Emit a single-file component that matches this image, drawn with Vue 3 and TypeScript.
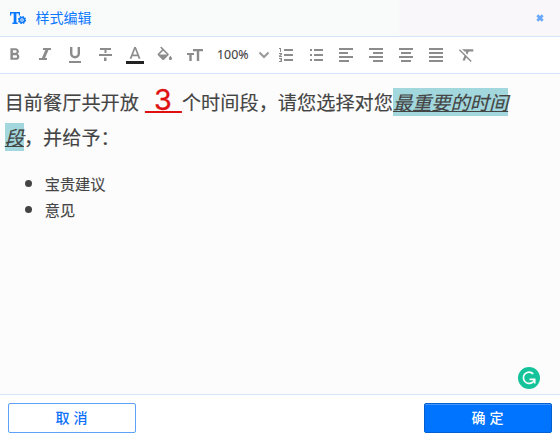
<script setup lang="ts">
interface Tool {
  name: string
  path: string
  transform?: string
}

const textTools: Tool[] = [
  { name: '加粗', transform: 'translate(4.6 7.9) scale(.83)', path: 'M15.6 10.79c.97-.67 1.65-1.77 1.65-2.79 0-2.26-1.75-4-4-4H7v14h7.04c2.09 0 3.71-1.7 3.71-3.79 0-1.52-.86-2.82-2.15-3.42zM10 6.5h3c.83 0 1.5.67 1.5 1.5s-.67 1.5-1.5 1.5h-3v-3zm3.5 9H10v-3h3.5c.83 0 1.5.67 1.5 1.5s-.67 1.5-1.5 1.5z' },
  { name: '斜体', path: 'M13 11h8v2h-2.500l-3.400 8H17v2H9v-2h2.900l3.400-8H13z' },
  { name: '下划线', path: 'M10 10h2.400v6.300a2.600 2.600 0 0 0 5.200 0V10H20v6.500a5 5 0 0 1-10 0zM9 24h12v2H9z' },
  { name: '删除线', path: 'M10 11h11v2h-4.500v3h-2v-3H10zM9 17h13v2H9zM14 20.500h2.500V24H14z' },
  { name: '文字颜色', transform: 'translate(5 7.5) scale(.84)', path: 'M11 3L5.5 17h2.25l1.12-3h6.25l1.12 3h2.25L13 3h-2zm-1.38 9L12 5.67 14.38 12H9.62z' },
  { name: '背景颜色', transform: 'translate(5.2 9.5) scale(.8)', path: 'M16.56 8.94L7.62 0 6.21 1.41l2.38 2.38-5.15 5.15c-.59.59-.59 1.54 0 2.12l5.5 5.5c.29.29.68.44 1.06.44s.77-.15 1.06-.44l5.5-5.5c.59-.58.59-1.53 0-2.12zM5.21 10L10 5.21 14.79 10H5.21zM19 11.5s-2 2.17-2 3.5c0 1.1.9 2 2 2s2-.9 2-2c0-1.33-2-3.5-2-3.5z' },
  { name: '字号', path: 'M13 12h10v2.200h-3.800v9.800h-2.400V14.200H13zM7 16h7v2h-2.300v6H9.300v-6H7z' },
]

const blockTools: Tool[] = [
  { name: '有序列表', path: 'M8 11h2v4H9v-3H8zM8 16h3v1.500L9.300 19H11v1H8v-1.200l1.600-1.800H8zM8 21h3v4H8v-1h2v-.6H9v-.8h1V22H8zM13 12h9v2h-9zM13 17h9v2h-9zM13 22h9v2h-9z' },
  { name: '无序列表', path: 'M9 12h2v2H9zM9 17h2v2H9zM9 22h2v2H9zM13 12h9v2h-9zM13 17h9v2h-9zM13 22h9v2h-9z' },
  { name: '左对齐', path: 'M8 11h14v2H8zM8 15h9v2H8zM8 19h14v2H8zM8 23h10v2H8z' },
  { name: '右对齐', path: 'M8 11h14v2H8zM12 15h10v2H12zM8 19h14v2H8zM12 23h10v2H12z' },
  { name: '居中', path: 'M8 11h14v2H8zM10 15h10v2H10zM8 19h14v2H8zM10 23h10v2H10z' },
  { name: '两端对齐', path: 'M8 11h14v2H8zM8 15h14v2H8zM8 19h14v2H8zM8 23h14v2H8z' },
  { name: '清除格式', transform: 'translate(6.3 8.2) scale(.8)', path: 'M3.27 5L2 6.27l6.97 6.97L6.5 19h3l1.57-3.66L16.73 21 18 19.73 3.55 5.27 3.27 5zM6 5v.18L8.82 8h2.4l-.72 1.68 2.1 2.1L14.21 8H20V5H6z' },
]

const suggestions: string[] = ['宝贵建议', '意见']
</script>

<template>
  <div class="dialog">
    <header class="head">
      <svg class="logo" width="17" height="14" viewBox="0 0 17 14">
        <path d="M0 1h10v3.500H8.700V2.600H6.400v8.800h1.300V13H2.400v-1.600h1.300V2.600H1.300v1.900H0z" />
        <circle cx="12" cy="9" r="2.500" stroke-width="1.500" />
        <circle cx="12" cy="9" r="3.500" stroke-width="1.200" stroke-dasharray="1.500 1.250" />
        <circle cx="12" cy="9" r=".4" />
      </svg>
      <span class="title">样式编辑</span>
      <svg class="close" width="8" height="8" viewBox="0 0 8 8">
        <path d="M1.300 1.300l5.400 5.400M6.700 1.300L1.300 6.700" stroke="#68a9fb" stroke-width="2.700" />
      </svg>
    </header>

    <div class="toolbar">
      <svg v-for="(t, i) in textTools" :key="t.name" width="30" height="36" viewBox="0 0 30 36">
        <path :d="t.path" :transform="t.transform" />
        <rect v-if="i === 4" class="swatch" x="6" y="24" width="18" height="3" />
      </svg>
      <div class="zoom">
        <span>100%</span>
        <svg width="12" height="8" viewBox="0 0 12 8">
          <path class="chevron" d="M1.500 1.500L6 6l4.500-4.500" />
        </svg>
      </div>
      <svg v-for="t in blockTools" :key="t.name" width="30" height="36" viewBox="0 0 30 36">
        <path :d="t.path" :transform="t.transform" />
      </svg>
    </div>

    <main class="content">
      <p class="para">目前餐厅共开放 <span class="count">&nbsp;3&nbsp;</span>个时间段，请您选择对您<em class="mark">最重要的时间段</em>，并给予：</p>
      <ul class="list">
        <li v-for="s in suggestions" :key="s">{{ s }}</li>
      </ul>
      <svg class="badge" width="22" height="22" viewBox="0 0 22 22">
        <circle cx="11" cy="11" r="11" fill="#15c39a" />
        <path d="M15.200 6.800A5.700 5.700 0 1 0 16.300 13" fill="none" stroke="#fff" stroke-width="1.700" />
        <path d="M11.500 12.300h5.200v4.300" fill="none" stroke="#fff" stroke-width="1.700" />
      </svg>
    </main>

    <footer class="foot">
      <button class="btn">取 消</button>
      <button class="btn primary">确 定</button>
    </footer>
  </div>
</template>

<style>
body {
  margin: 0;
}
</style>

<style scoped>
.dialog {
  width: 560px;
  height: 441px;
  display: flex;
  flex-direction: column;
  background: #fff;
  font-family: "Noto Sans", "Noto Sans CJK SC", sans-serif;
  color: #444;
}
.head {
  height: 36px;
  border-bottom: 1px solid #d5e5fa;
  background: linear-gradient(to right, #f9fafa 399px, #f9f7f9 399px);
  display: flex;
  align-items: center;
  padding: 0 16px 0 10px;
}
.logo path {
  fill: #0a78ff;
}
.logo circle {
  fill: none;
  stroke: #0a78ff;
}
.title {
  margin-left: 8.5px;
  padding-bottom: 2px;
  font: 400 14px/34px "Noto Sans CJK SC", sans-serif;
  color: #0a78ff;
}
.close {
  margin-left: auto;
}
.toolbar {
  height: 36px;
  border-bottom: 1px solid #d5e5fa;
  display: flex;
  fill: #8c8c8c;
}
.swatch {
  fill: #222;
}
.zoom {
  width: 61px;
  box-sizing: border-box;
  padding: 0 1px 0 7px;
  display: flex;
  align-items: center;
  justify-content: space-between;
  font-size: 12.4px;
  -webkit-text-stroke: 0.1px #444;
  color: #444;
}
.zoom span {
  padding-bottom: 1px;
}
.chevron {
  fill: none;
  stroke: #999;
  stroke-width: 2;
}
.content {
  flex: 1;
  position: relative;
  background: #fcfcfc;
  padding: 11px 40px 0 4.7px;
  font-family: "Noto Sans CJK SC", sans-serif;
  -webkit-text-stroke: 0.15px #444;
}
.para {
  margin: 0;
  font-size: 19.2px;
  line-height: 35px;
}
.count {
  margin-left: 1.6px;
  font-family: Inter, sans-serif;
  font-size: 28.8px;
  font-weight: 400;
  line-height: 1;
  letter-spacing: 1px;
  color: #df1010;
  -webkit-text-stroke: 0.3px #df1010;
  text-decoration: underline;
  text-decoration-thickness: 2px;
  text-underline-offset: 1px;
  text-decoration-skip-ink: none;
}
.mark {
  background: #a2d7dd;
  text-decoration: underline;
  text-underline-offset: 1px;
  text-decoration-thickness: 1px;
}
.list {
  margin: 15px 0 0;
  padding-left: 40px;
  font-size: 15.2px;
  line-height: 26px;
  list-style: none;
}
.list li {
  display: flex;
  align-items: center;
}
.list li::before {
  content: "";
  width: 7px;
  height: 7px;
  margin: 0 13px 0 -20px;
  border-radius: 50%;
  background: #444;
}
.badge {
  position: absolute;
  right: 20px;
  bottom: 5px;
}
.foot {
  height: 47px;
  box-sizing: border-box;
  border-top: 1px solid #d5e5fa;
  display: flex;
  justify-content: space-between;
  align-items: flex-start;
  padding: 8px;
}
.btn {
  width: 128px;
  height: 30px;
  padding: 0 1px 2px 0;
  border: 1px solid #5aa2fb;
  border-radius: 2px;
  background: #fff;
  color: #0a70fa;
  font: 500 14px/26px "Noto Sans CJK SC", sans-serif;
  word-spacing: 1px;
}
.primary {
  background: #0074ff;
  border-color: #0560cf;
  color: #fff;
  box-shadow: inset 0 1px 0 #4398ff;
}
</style>
